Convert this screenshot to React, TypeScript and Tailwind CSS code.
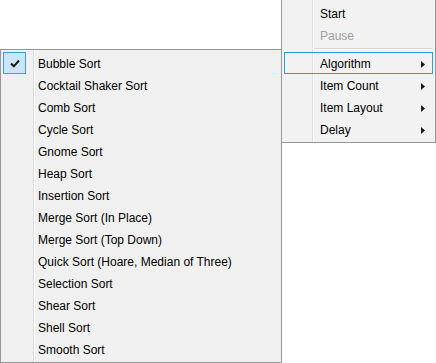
const ALGORITHMS = [
  'Bubble Sort',
  'Cocktail Shaker Sort',
  'Comb Sort',
  'Cycle Sort',
  'Gnome Sort',
  'Heap Sort',
  'Insertion Sort',
  'Merge Sort (In Place)',
  'Merge Sort (Top Down)',
  'Quick Sort (Hoare, Median of Three)',
  'Selection Sort',
  'Shear Sort',
  'Shell Sort',
  'Smooth Sort',
]

type MainItem = { label: string; disabled?: boolean; sub?: boolean; active?: boolean; separator?: boolean }

const MAIN_ITEMS: MainItem[] = [
  { label: 'Start' },
  { label: 'Pause', disabled: true },
  { label: '', separator: true },
  { label: 'Algorithm', sub: true, active: true },
  { label: 'Item Count', sub: true },
  { label: 'Item Layout', sub: true },
  { label: 'Delay', sub: true },
]

function Arrow() {
  return (
    <svg width="4" height="7" viewBox="0 0 4 7" className="block">
      <path d="M0 0 L4 3.5 L0 7 Z" fill="#1a1a1a" />
    </svg>
  )
}

function Check() {
  return (
    <svg width="10" height="9" viewBox="0 0 10 9" className="block">
      <path d="M1 4.5 L3.8 7.3 L9 1.5" fill="none" stroke="#1a1a1a" strokeWidth="2" />
    </svg>
  )
}

export default function App() {
  return (
    <div
      className="relative h-[363px] w-[436px] overflow-hidden bg-white text-[12px] text-black"
      style={{ fontFamily: '"Liberation Sans", "Segoe UI", sans-serif' }}
    >
      {/* root menu */}
      <div className="absolute left-[281px] top-[-1px] w-[155px] border border-[#979797] bg-[#f2f2f2] py-[2px]">
        <div className="absolute bottom-0 left-[30px] top-0 w-[2px] border-l border-[#e0e0e0] bg-white" />
        {MAIN_ITEMS.map((item, i) =>
          item.separator ? (
            <div key={i} className="flex h-[6px] items-center pl-[32px] pr-[3px]">
              <div className="h-[2px] w-full border-t border-[#d7d7d7] bg-white" />
            </div>
          ) : (
            <div key={i} className="relative h-[22px] px-[2px]">
              <div
                className={
                  'flex h-full items-center border pl-[35px] pr-[7px] pt-[2px] ' +
                  (item.active ? 'border-[#26a0da]' : 'border-transparent')
                }
              >
                <span className={'flex-1 leading-none ' + (item.disabled ? 'text-[#a0a0a0]' : '')}>{item.label}</span>
                {item.sub && <Arrow />}
              </div>
            </div>
          ),
        )}
      </div>

      {/* algorithm submenu */}
      <div className="absolute left-0 top-[49px] w-[282px] border border-[#979797] bg-[#f0f0f0] py-[2px]">
        <div className="absolute bottom-0 left-[32px] top-0 w-[2px] border-l border-[#dcdcdc] bg-white" />
        {ALGORITHMS.map((name, i) => (
          <div key={name} className="relative flex h-[22px] items-center">
            <div className="flex w-[37px] justify-start pl-[2px]">
              {i === 0 && (
                <div className="flex h-[22px] w-[23px] items-center justify-center border border-[#3c9fdb] bg-[#cce4f7]">
                  <Check />
                </div>
              )}
            </div>
            <span className="pt-[2px] leading-none">{name}</span>
          </div>
        ))}
      </div>
    </div>
  )
}
